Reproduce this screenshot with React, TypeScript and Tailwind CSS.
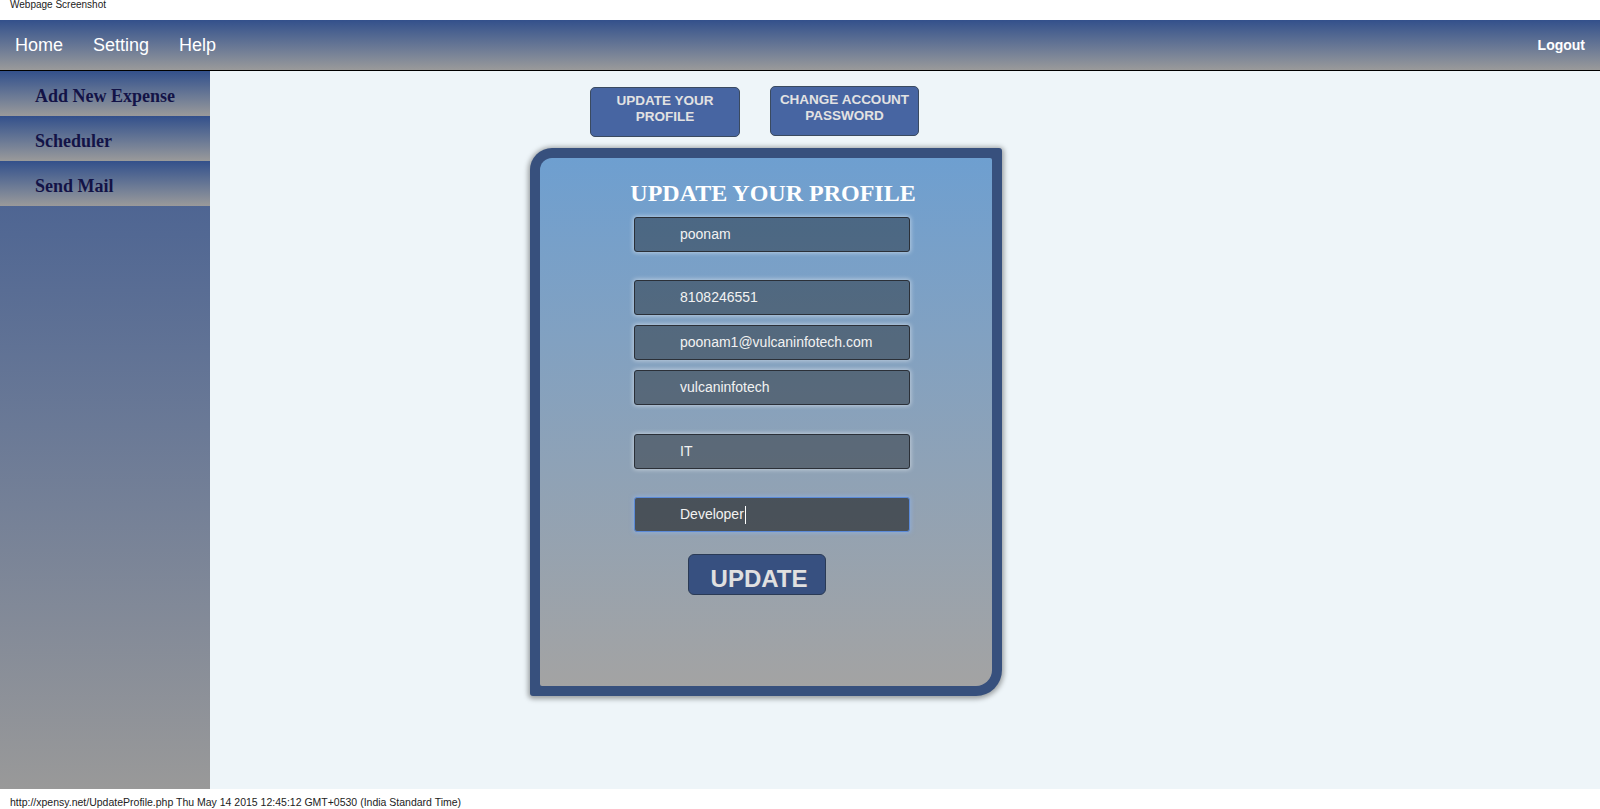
const fields = [
  { value: 'poonam', mt: 'mt-[9px]' },
  { value: '8108246551', mt: 'mt-[28px]' },
  { value: 'poonam1@vulcaninfotech.com', mt: 'mt-[10px]' },
  { value: 'vulcaninfotech', mt: 'mt-[10px]' },
  { value: 'IT', mt: 'mt-[29px]' },
];

const sideLinks = ['Add New Expense', 'Scheduler', 'Send Mail'];

function Field({ value, mt }: { value: string; mt: string }) {
  return (
    <div
      className={`${mt} ml-[94px] flex h-[35px] w-[276px] items-center rounded-[3px] border border-[#2b3038] bg-black/35 pl-[45px] text-[14px] text-[#f2f2f2] shadow-[0_0_4px_1px_rgba(255,255,255,0.45)]`}
    >
      {value}
    </div>
  );
}

export default function App() {
  return (
    <div className="flex h-[809px] w-[1600px] flex-col bg-white font-['Liberation_Sans',Arial,sans-serif]">
      <div className="h-[20px] pl-[10px] text-[10px] leading-[10px] text-[#222]">Webpage Screenshot</div>

      <header className="flex h-[51px] items-center justify-between border-b border-black bg-gradient-to-b from-[#33508b] to-[#9a9a9a] pl-[15px] pr-[15px]">
        <nav className="flex gap-[30px] text-[18px] text-white">
          <a>Home</a>
          <a>Setting</a>
          <a>Help</a>
        </nav>
        <a className="text-[14px] font-bold text-white">Logout</a>
      </header>

      <div className="flex h-[718px]">
        <aside className="flex w-[210px] flex-col bg-gradient-to-b from-[#3e5990] to-[#999999]">
          {sideLinks.map((link) => (
            <div
              key={link}
              className="flex h-[45px] items-center bg-gradient-to-b from-[#33508b] to-[#9a9a9a] pl-[35px] pt-[5px] font-['Liberation_Serif','Times_New_Roman',serif] text-[18px] font-bold text-[#131347]"
            >
              {link}
            </div>
          ))}
        </aside>

        <main className="flex-1 bg-[#eef5f9]">
          <div className="ml-[380px] mt-[15px] flex items-start gap-[30px]">
            <button className="mt-[1px] h-[50px] w-[150px] rounded-[5px] border border-[#3a4a60] bg-[#4765a2] pb-[6px] text-[13.5px] font-bold leading-[16px] text-[#e2e2e2]">
              UPDATE YOUR
              <br />
              PROFILE
            </button>
            <button className="h-[50px] w-[149px] rounded-[5px] border border-[#3a4a60] bg-[#4765a2] pb-[6px] text-[13.5px] font-bold leading-[16px] text-[#e2e2e2]">
              CHANGE ACCOUNT
              <br />
              PASSWORD
            </button>
          </div>

          <section className="ml-[320px] mt-[11px] h-[548px] w-[472px] rounded-bl-[3px] rounded-br-[26px] rounded-tl-[22px] rounded-tr-[3px] bg-[#37507d] p-[10px] shadow-[0_1px_5px_2px_rgba(0,0,0,0.35)]">
            <div className="flex h-full flex-col rounded-bl-[2px] rounded-br-[16px] rounded-tl-[12px] rounded-tr-[2px] bg-gradient-to-b from-[#6e9fd0] to-[#a3a3a3]">
              <h1 className="mt-[20px] pl-[14px] text-center font-['Liberation_Serif','Times_New_Roman',serif] text-[24px] font-bold leading-[30px] text-white">
                UPDATE YOUR PROFILE
              </h1>
              {fields.map((f) => (
                <Field key={f.value} value={f.value} mt={f.mt} />
              ))}
              <div className="ml-[94px] mt-[28px] flex h-[35px] w-[276px] items-center rounded-[3px] border border-[#5b8ad8] bg-black/50 pl-[45px] text-[14px] text-[#f2f2f2] shadow-[0_0_4px_1px_rgba(140,180,240,0.6)]">
                Developer
                <span className="ml-[1px] inline-block h-[18px] w-[1px] bg-white" />
              </div>
              <button className="ml-[148px] mt-[22px] h-[41px] w-[138px] rounded-[6px] border border-[#2a3a55] bg-[#375080] pl-[4px] pt-[9px] text-[24px] font-bold leading-[28px] text-[#e0e0e0]">
                UPDATE
              </button>
            </div>
          </section>
        </main>
      </div>

      <div className="flex h-[20px] items-center pl-[10px] pt-[7px] text-[10.5px] text-[#222]">
        http://xpensy.net/UpdateProfile.php Thu May 14 2015 12:45:12 GMT+0530 (India Standard Time)
      </div>
    </div>
  );
}
